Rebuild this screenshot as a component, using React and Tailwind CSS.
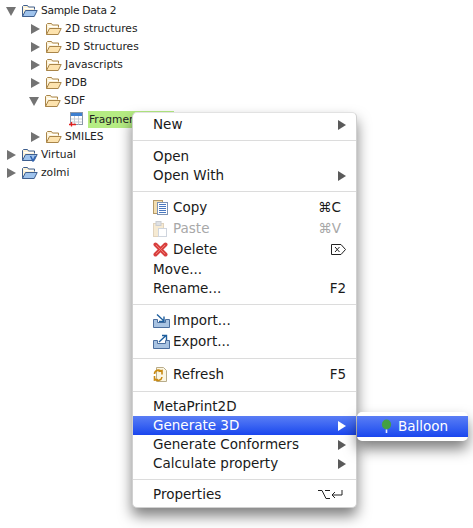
import React from 'react';

// --- icons ---
const FolderIcon = ({ project, virtual }) => (
  <svg width="17" height="14" viewBox="0 0 17 14" className="shrink-0">
    <path d="M1.5 12.5V2.5L2.5 1.5H6.5L7.5 3H13.5V5.5" fill="#fdf3d8" stroke={project ? '#3f5f8f' : '#a98549'} />
    <path d="M3 4.5H12.5" stroke="#fff" fill="none" />
    <path d="M1.5 12.5L4.5 6.5H16.2L13.2 12.5Z" fill={project ? '#9fc3ec' : '#fde3ae'} stroke={project ? '#3f5f8f' : '#a98549'} strokeLinejoin="round" />
    {virtual && <path d="M9.5 8L12 13L14.5 8" stroke="#2f62b0" strokeWidth="1.5" fill="none" />}
  </svg>
);

const SdfIcon = () => (
  <svg width="15" height="15" viewBox="0 0 15 15" className="shrink-0">
    <rect x="1.5" y="0.5" width="12" height="12" fill="#fff" stroke="#8a97a8" />
    <rect x="2" y="1" width="11" height="3" fill="#3d7fd0" />
    <path d="M2 7H13M2 10H13M5.5 4V12.5M9.5 4V12.5" stroke="#c7ced6" fill="none" />
    <path d="M0 12.5H7M2.5 10V14.5" stroke="#e02020" strokeWidth="1.3" fill="none" />
  </svg>
);

const CopyIcon = () => (
  <svg width="15" height="15" viewBox="0 0 15 15">
    <rect x="0.5" y="0.5" width="9" height="13" fill="#f3deb0" stroke="#b59a68" />
    <rect x="4.5" y="2.5" width="10" height="12" fill="#fff" stroke="#7d93b5" />
    <path d="M6 4.5H13M6 6.5H13M6 8.5H13M6 10.5H13M6 12.5H13" stroke="#4a78c0" fill="none" />
  </svg>
);

const PasteIcon = () => (
  <svg width="14" height="16" viewBox="0 0 14 16" opacity="0.55">
    <rect x="0.5" y="2.5" width="10" height="13" fill="#f0d9ae" stroke="#c9b088" />
    <rect x="3" y="0.5" width="5" height="4" fill="#c5c9cf" stroke="#a0a6ae" />
    <rect x="5.5" y="7.5" width="8" height="8" fill="#fff" stroke="#a8b4c4" />
  </svg>
);

const DeleteIcon = () => (
  <svg width="15" height="15" viewBox="0 0 15 15">
    <path d="M2.5 2.5L12.5 12.5M12.5 2.5L2.5 12.5" stroke="#d8403f" strokeWidth="4" strokeLinecap="round" fill="none" />
    <path d="M3 3L12 12M12 3L3 12" stroke="#ef7b72" strokeWidth="1" fill="none" />
  </svg>
);

const TrayIcon = ({ out }) => (
  <svg width="17" height="15" viewBox="0 0 17 15">
    <path d="M0.5 6.5H4.5V9.5H12.5V6.5H16.5V14.5H0.5Z" fill="#a8c3e2" stroke="#4c6f9f" />
    {out
      ? <path d="M6 8L13 1.5M9 1.5H13.5V6" stroke="#1f5f9e" strokeWidth="1.4" fill="none" />
      : <path d="M4 1.5L11 8M11 3.5V8.5H6" stroke="#1f5f9e" strokeWidth="1.4" fill="none" />}
  </svg>
);

const RefreshIcon = () => (
  <svg width="15" height="16" viewBox="0 0 15 16">
    <path d="M3.5 0.5H10.5L13.5 3.5V14.5H3.5Z" fill="#fbf6e4" stroke="#b8ac8a" />
    <path d="M1.5 7A4 4 0 0 1 8.5 4.5M9 7.5L9 3.5L5.5 4.5" stroke="#c98a12" strokeWidth="1.6" fill="none" />
    <path d="M9 10A4 4 0 0 1 2 12M1.5 9L1.5 13L5 12.5" stroke="#c98a12" strokeWidth="1.6" fill="none" />
  </svg>
);

const BalloonIcon = () => (
  <svg width="11" height="15" viewBox="0 0 11 15">
    <ellipse cx="5.5" cy="5.5" rx="4.6" ry="5" fill="#43a043" />
    <path d="M5.5 10.5V14" stroke="#e6edff" strokeWidth="1.6" />
  </svg>
);

const DeleteKeyGlyph = () => (
  <svg width="15" height="11" viewBox="0 0 15 11">
    <path d="M0.5 0.5H10L14.5 5.5L10 10.5H0.5Z M4 3L8.5 8M8.5 3L4 8" stroke="#222" fill="none" />
  </svg>
);

const OptReturnGlyph = () => (
  <svg width="25" height="11" viewBox="0 0 25 11" className="mr-[3px]">
    <path d="M0 1.5H4L8 9.5H12M7 1.5H12" stroke="#222" fill="none" />
    <path d="M24 1V6H14M17 3L14 6L17 9" stroke="#222" fill="none" />
  </svg>
);

const Arrow = ({ open }) => (
  <svg width="10" height="10" viewBox="0 0 10 10" className="shrink-0">
    {open ? <path d="M0 1H10L5 10Z" fill="#737373" /> : <path d="M1 0L10 5L1 10Z" fill="#737373" />}
  </svg>
);

const SubArrow = ({ white }) => (
  <svg width="8" height="10" viewBox="0 0 8 10">
    <path d="M0 0L8 5L0 10Z" fill={white ? '#fff' : '#5a5a5a'} />
  </svg>
);

// --- tree ---
const tree = [
  { label: 'Sample Data 2', indent: 'ml-[6px]', open: true, project: true, tight: true },
  { label: '2D structures', indent: 'ml-[30px]' },
  { label: '3D Structures', indent: 'ml-[30px]' },
  { label: 'Javascripts', indent: 'ml-[30px]' },
  { label: 'PDB', indent: 'ml-[30px]' },
  { label: 'SDF', indent: 'ml-[29px]', open: true },
  { file: true },
  { label: 'SMILES', indent: 'ml-[30px]' },
  { label: 'Virtual', indent: 'ml-[6px]', project: true, virtual: true },
  { label: 'zolmi', indent: 'ml-[6px]', project: true },
];

const TreeRow = ({ row }) => {
  if (row.file) {
    return (
      <div className="flex items-center h-[18px] ml-[69px]">
        <SdfIcon />
        <span className="ml-[4px] w-[86px] h-[17px] leading-[17px] pl-[1px] bg-[#b5ec83]">Fragmen</span>
      </div>
    );
  }
  return (
    <div className={`flex items-center h-[18px] ${row.indent}`}>
      <Arrow open={row.open} />
      <span className="ml-[5px] flex"><FolderIcon project={row.project} virtual={row.virtual} /></span>
      <span className={`ml-[3px] ${row.tight ? 'tracking-[-0.3px]' : ''}`}>{row.label}</span>
    </div>
  );
};

// --- menu ---
const Sep = ({ h }) => (
  <div className={`flex items-center ${h}`}>
    <div className="w-full h-px bg-[#dcdcdc]" />
  </div>
);

const MenuRow = ({ label, icon, shortcut, sub, active, disabled, h = 'h-[19px]' }) => (
  <div className={`flex items-center pr-[10px] ${h} ${active ? 'bg-gradient-to-b from-[#5a7df5] to-[#1a45ee] text-white' : disabled ? 'text-[#a8a8a8]' : 'text-[#1a1a1a]'}`}>
    {icon ? <span className="w-[20px] ml-[20px] flex items-center">{icon}</span> : <span className="w-[20px]" />}
    <span className="flex-1">{label}</span>
    {sub && <SubArrow white={active} />}
    {shortcut}
  </div>
);

const Key = ({ children, dim, cmd }) => (
  <span className={`${dim ? 'text-[#a8a8a8]' : ''} ${cmd ? 'mr-[5px]' : ''}`}>{children}</span>
);

export default function App() {
  return (
    <div className="relative w-[473px] h-[528px] bg-white overflow-hidden text-[10.7px] text-[#222] font-['DejaVu_Sans',sans-serif]">
      <div className="pt-[2px]">
        {tree.map((row, i) => <TreeRow key={i} row={row} />)}
      </div>

      {/* context menu */}
      <div className="absolute left-[132px] top-[112px] w-[225px] bg-white rounded-[5px] border border-[#d0d0d0] border-t-[#e2e2e2] pt-[2px] pb-[3px] text-[13.5px] shadow-[0_8px_14px_rgba(0,0,0,0.5)]">
        <MenuRow label="New" sub />
        <Sep h="h-[13px]" />
        <MenuRow label="Open" />
        <MenuRow label="Open With" sub />
        <Sep h="h-[12px]" />
        <MenuRow label="Copy" icon={<CopyIcon />} shortcut={<Key cmd>⌘C</Key>} h="h-[21px]" />
        <MenuRow label="Paste" icon={<PasteIcon />} shortcut={<Key dim cmd>⌘V</Key>} disabled h="h-[21px]" />
        <MenuRow label="Delete" icon={<DeleteIcon />} shortcut={<DeleteKeyGlyph />} h="h-[21px]" />
        <MenuRow label="Move..." />
        <MenuRow label="Rename..." shortcut={<Key>F2</Key>} />
        <Sep h="h-[12px]" />
        <MenuRow label="Import..." icon={<TrayIcon />} h="h-[21px]" />
        <MenuRow label="Export..." icon={<TrayIcon out />} h="h-[21px]" />
        <Sep h="h-[12px]" />
        <MenuRow label="Refresh" icon={<RefreshIcon />} shortcut={<Key>F5</Key>} h="h-[21px]" />
        <Sep h="h-[12px]" />
        <MenuRow label="MetaPrint2D" />
        <MenuRow label="Generate 3D" sub active />
        <MenuRow label="Generate Conformers" sub />
        <MenuRow label="Calculate property" sub />
        <Sep h="h-[12px]" />
        <MenuRow label="Properties" shortcut={<OptReturnGlyph />} />
      </div>

      {/* submenu */}
      <div className="absolute left-[357px] top-[412px] w-[111px] bg-white rounded-[5px] py-[4px] text-[13.5px] shadow-[0_8px_14px_rgba(0,0,0,0.5)]">
        <div className="flex items-center h-[21px] pl-[24px] bg-gradient-to-b from-[#5a7df5] to-[#1a45ee] text-white">
          <BalloonIcon />
          <span className="ml-[6px]">Balloon</span>
        </div>
      </div>
    </div>
  );
}
